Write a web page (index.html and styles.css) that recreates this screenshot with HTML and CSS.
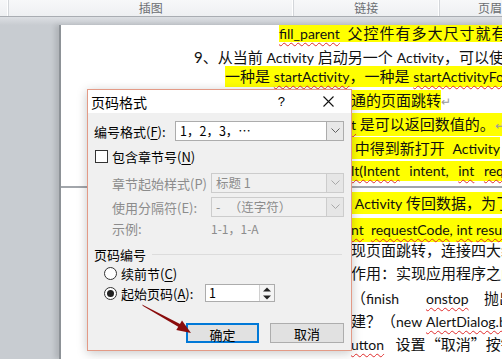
FILE: index.html
```html
<!DOCTYPE html>
<html lang="zh-CN">
<head>
  <meta charset="UTF-8">
  <title>页码格式</title>
  <link rel="stylesheet" href="styles.css">
</head>
<body>
  <div class="screen">
    <!-- 功能区底部分组 -->
    <div class="ribbon">
      <div class="rb-group rb-edge"></div>
      <div class="rb-group rb-pic">插图</div>
      <div class="rb-group rb-link">链接</div>
      <div class="rb-group rb-head">页眉</div>
    </div>

    <div class="workspace">
      <div class="page">
        <div class="line l1"><span class="hl"><span class="lat sp">fill_parent</span>&nbsp; <span class="wide">父控件有多大尺寸就有</span></span></div>
        <div class="line l2">9、从当前 <span class="lat">Activity</span> 启动另一个 <span class="lat">Activity</span>，可以使用</div>
        <div class="line l3"><span class="hl">一种是 <span class="lat sp">startActivity</span>，一种是 <span class="lat sp">startActivityForResult</span></span></div>
        <div class="line l4"><span class="hl">通的页面跳转</span><span class="mark">↵</span></div>
        <div class="line l5"><span class="hl"><span class="lat sp">t</span> 是可以返回数值的。<span class="mark">↵</span></span></div>
        <div class="line l6"><span class="hl">&nbsp;中得到新打开 &nbsp;<span class="lat">Activity</span></span></div>
        <div class="line l7"><span class="hl lat spread"><span class="sp">lt(Intent</span> intent, <span class="sp">int</span> <span class="sp">request</span></span></div>
        <div class="page-break"></div>
        <div class="line l8"><span class="hl">&nbsp;<span class="lat">Activity</span> 传回数据，为了</span></div>
        <div class="line l9"><span class="hl lat"><span class="sp">nt</span>&nbsp; <span class="sp">requestCode</span>, <span class="sp">int</span> <span class="sp">result</span></span></div>
        <div class="line l10">现页面跳转，连接四大组件</div>
        <div class="line l11">作用：实现应用程序之间</div>
        <div class="line l12">（<span class="lat">finish</span>&nbsp;&nbsp;&nbsp;&nbsp;&nbsp;&nbsp; <span class="lat sp">onstop</span>&nbsp;&nbsp;&nbsp; 抛出</div>
        <div class="line l13">建？（<span class="lat">new</span> <span class="lat sp">AlertDialog.builder</span></div>
        <div class="line l14"><span class="lat sp">utton</span>&nbsp;&nbsp; 设置<span class="cjk">“</span>取消<span class="cjk">”</span>按钮</div>
      </div>
    </div>

    <!-- 页码格式对话框 -->
    <div class="dialog">
      <div class="dlg-title">
        <span class="dlg-name">页码格式</span>
        <span class="dlg-help">?</span>
        <svg class="dlg-close" width="11" height="11" viewBox="0 0 11 11">
          <path d="M0.5 0.5 L10.5 10.5 M10.5 0.5 L0.5 10.5" stroke="#111" stroke-width="1.1" fill="none"/>
        </svg>
      </div>

      <div class="dlg-body">
        <div class="row row-format">
          <span class="lbl lbl-format">编号格式(<u>F</u>):</span>
          <div class="select select-format">
            <span class="select-text">1，2，3，…</span>
            <span class="select-arrow">
              <svg width="9" height="6" viewBox="0 0 9 6"><path d="M0.5 0.5 L4.5 4.5 L8.5 0.5" stroke="#606060" fill="none"/></svg>
            </span>
          </div>
        </div>

        <div class="row row-check">
          <span class="checkbox"></span>
          <span class="lbl">包含章节号(<u>N</u>)</span>
        </div>

        <div class="row row-sub row-style">
          <span class="lbl lbl-sub off">章节起始样式(P)</span>
          <div class="select select-sub disabled">
            <span class="select-text">标题 1</span>
            <span class="select-arrow">
              <svg width="9" height="6" viewBox="0 0 9 6"><path d="M0.5 0.5 L4.5 4.5 L8.5 0.5" stroke="#a8a8a8" fill="none"/></svg>
            </span>
          </div>
        </div>

        <div class="row row-sub row-sep">
          <span class="lbl lbl-sub off">使用分隔符(E):</span>
          <div class="select select-sub disabled">
            <span class="select-text">-&nbsp;&nbsp;&nbsp;（连字符）</span>
            <span class="select-arrow">
              <svg width="9" height="6" viewBox="0 0 9 6"><path d="M0.5 0.5 L4.5 4.5 L8.5 0.5" stroke="#a8a8a8" fill="none"/></svg>
            </span>
          </div>
        </div>

        <div class="row row-sub row-sample">
          <span class="lbl lbl-sub off">示例:</span>
          <span class="sample off">1-1，1-A</span>
        </div>

        <div class="row row-group">
          <span class="lbl">页码编号</span>
          <span class="group-line"></span>
        </div>

        <div class="row row-radio row-r1">
          <span class="radio"></span>
          <span class="lbl">续前节(<u>C</u>)</span>
        </div>

        <div class="row row-radio row-r2">
          <span class="radio checked"></span>
          <span class="lbl lbl-start">起始页码(<u>A</u>):</span>
          <div class="spin">
            <span class="spin-text">1</span>
            <span class="spin-btns">
              <svg width="8" height="5" viewBox="0 0 8 5"><path d="M0 4.5 L4 0.5 L8 4.5 Z" fill="#222"/></svg>
              <svg width="8" height="5" viewBox="0 0 8 5"><path d="M0 0.5 L4 4.5 L8 0.5 Z" fill="#222"/></svg>
            </span>
          </div>
        </div>

        <div class="row row-btns">
          <button class="btn btn-default">确定</button>
          <button class="btn">取消</button>
        </div>
      </div>
    </div>

    <!-- 红色标注箭头 -->
    <svg class="arrow" width="502" height="359" viewBox="0 0 502 359">
      <path d="M142 304.6 L143 306 L179.5 327.6 L181 324.4 Z" fill="#8a0c0c"/>
      <path d="M191 333 L176.3 330 L182 320.5 Z" fill="#8a0c0c"/>
    </svg>
  </div>
</body>
</html>
```

FILE: styles.css
```css
/* 整体画布 */
body {
  margin: 0;
  padding: 0;
  background-color: #c8ccd1;
}

.screen {
  position: relative;
  width: 502px;
  height: 359px;
  overflow: hidden;
  display: flex;
  flex-direction: column;
}

/* 功能区 */
.ribbon {
  height: 16px;
  display: flex;
  background: linear-gradient(#f7f8f9, #eef0f2);
  border-bottom: 1px solid #a9adb2;
  font-family: "Noto Sans CJK SC", sans-serif;
  font-size: 12px;
  line-height: 15px;
  color: #6b6e72;
  white-space: nowrap;
  overflow: hidden;
}

.rb-group {
  box-sizing: border-box;
  text-align: center;
  border-right: 1px solid #d3d6da;
  box-shadow: inset -1px 0 0 #ffffff;
}

.rb-edge { width: 9px; }
.rb-pic { width: 286px; }
.rb-link { width: 147px; }
.rb-head { flex: 1; text-align: left; padding-left: 38px; border-right: none; box-shadow: none; }

/* 文档区域 */
.workspace {
  flex: 1;
  display: flex;
  padding: 8px 0 0 59px;
  background: linear-gradient(#dcdfe3, #c8ccd1 8px);
}

.page {
  flex: 1;
  background-color: #ffffff;
  border-left: 2px solid #8d9297;
  box-shadow: -4px 0 5px rgba(0, 0, 0, 0.12);
  overflow: hidden;
  white-space: nowrap;
  font-family: Lato, "Noto Sans CJK SC", sans-serif;
  font-size: 15px;
  color: #111111;
}

.line {
  height: 22px;
  line-height: 22px;
  padding-left: 290px;
}

.hl {
  display: inline-block;
  height: 100%;
  background-color: #ffff00;
}

.lat {
  font-family: Lato, sans-serif;
  font-size: 14px;
}

.cjk {
  font-family: "Noto Sans CJK SC", sans-serif;
}

.sp {
  text-decoration: underline wavy #e02b2b;
  text-decoration-thickness: 1px;
  text-underline-offset: 3px;
}

.mark {
  color: #9a9a9a;
  font-size: 12px;
}

.wide { letter-spacing: 1px; }
.spread { word-spacing: 6px; }

.l1 { height: 17px; line-height: 17px; padding-left: 218px; }
.l2 { margin-top: 3px; height: 21px; line-height: 24px; padding-left: 133px; }
.l3 { height: 21px; line-height: 21px; padding-left: 164px; }
.l4 { margin-top: 3px; height: 20px; line-height: 20px; }
.l5 { margin-top: 3px; height: 23px; line-height: 23px; }
.l6 { margin-top: 1px; }
.l7 { margin-top: 1px; height: 20px; line-height: 20px; }
.l8 { margin-top: 0; }
.l9 { margin-top: 3px; height: 24px; line-height: 24px; }
.l10 { height: 19px; line-height: 19px; }
.l11 { margin-top: 2px; }
.l12 { margin-top: 3px; }
.l13 { margin-top: 1px; }
.l14 { margin-top: 1px; }

.page-break {
  height: 12px;
  background: linear-gradient(transparent 6px, #a2a6ab 6px, #a2a6ab 8px, transparent 8px);
}

/* 对话框 */
.dialog {
  position: absolute;
  left: 87px;
  top: 89px;
  width: 265px;
  height: 262px;
  box-sizing: border-box;
  border: 1px solid #e39a86;
  background-color: #f0f0f0;
  box-shadow: 0 2px 10px rgba(0, 0, 0, 0.22);
  font-family: "Noto Sans CJK SC", sans-serif;
  font-size: 13px;
  color: #000000;
}

.dlg-title {
  height: 23px;
  display: flex;
  align-items: center;
  padding-left: 3px;
  background-color: #ffffff;
  font-size: 14px;
}

.dlg-help {
  margin-left: auto;
  font-family: "Liberation Sans", sans-serif;
  font-size: 13px;
}

.dlg-close {
  margin: 0 17px 0 38px;
}

.dlg-body {
  display: flex;
  flex-direction: column;
  padding: 8px 7px 0 6px;
}

.row {
  display: flex;
  align-items: center;
  height: 18px;
}

.lbl u { text-decoration: underline; text-underline-offset: 2px; }

.off { color: #8c8c8c; }

.row-format { height: 20px; }
.lbl-format { width: 81px; }
.select-format { width: 169px; }

.row-check { margin-top: 8px; height: 15px; }

.checkbox {
  width: 11px;
  height: 11px;
  border: 1px solid #333333;
  background-color: #ffffff;
  margin: 0 4px 0 1px;
}

.row-sub { padding-left: 18px; }
.lbl-sub { width: 99px; }
.select-sub { width: 133px; }

.row-style { margin-top: 9px; height: 20px; }
.row-sep { margin-top: 4px; height: 20px; }
.row-sample { margin-top: 2px; }

.sample { font-size: 12px; }

.select {
  display: flex;
  height: 20px;
  box-sizing: border-box;
  border: 1px solid #acacac;
  background-color: #ffffff;
}

.select-text {
  flex: 1;
  padding-left: 4px;
  line-height: 18px;
  font-size: 12.5px;
}

.select-arrow {
  width: 16px;
  display: flex;
  align-items: center;
  justify-content: center;
  border-left: 1px solid #acacac;
  background-color: #e8e8e8;
}

.select.disabled {
  border-color: #cccccc;
  background-color: #f0f0f0;
  color: #8c8c8c;
}

.select.disabled .select-arrow {
  border-left-color: #cccccc;
  background-color: #e6e6e6;
}

.row-group { margin-top: 8px; }

.group-line {
  flex: 1;
  height: 1px;
  margin: 1px 2px 0 6px;
  background-color: #dcdcdc;
}

.row-radio { padding-left: 10px; }
.row-r1 { margin-top: 1px; }
.row-r2 { margin-top: 2px; }

.radio {
  width: 11px;
  height: 11px;
  border: 1px solid #333333;
  border-radius: 50%;
  background-color: #ffffff;
  margin-right: 4px;
  display: flex;
  align-items: center;
  justify-content: center;
}

.radio.checked::after {
  content: "";
  width: 7px;
  height: 7px;
  border-radius: 50%;
  background-color: #222222;
}

.lbl-start { width: 84px; }

.spin {
  width: 70px;
  height: 18px;
  box-sizing: border-box;
  display: flex;
  border: 1px solid #acacac;
  background-color: #ffffff;
}

.spin-text {
  flex: 1;
  padding-left: 3px;
  line-height: 16px;
  font-size: 12.5px;
}

.spin-btns {
  width: 14px;
  display: flex;
  flex-direction: column;
  align-items: center;
  justify-content: space-around;
  border-left: 1px solid #d0d0d0;
  background-color: #f4f4f4;
}

.row-btns {
  margin-top: 21px;
  height: 20px;
  justify-content: flex-end;
  gap: 11px;
}

.btn {
  height: 20px;
  width: 74px;
  padding: 0;
  border: 1px solid #adadad;
  background-color: #e1e1e1;
  font-family: "Noto Sans CJK SC", sans-serif;
  font-size: 13px;
  color: #000000;
}

.btn-default {
  width: 73px;
  border: 2px solid #0078d7;
}

/* 标注箭头 */
.arrow {
  position: absolute;
  left: 0;
  top: 0;
  pointer-events: none;
}
```
